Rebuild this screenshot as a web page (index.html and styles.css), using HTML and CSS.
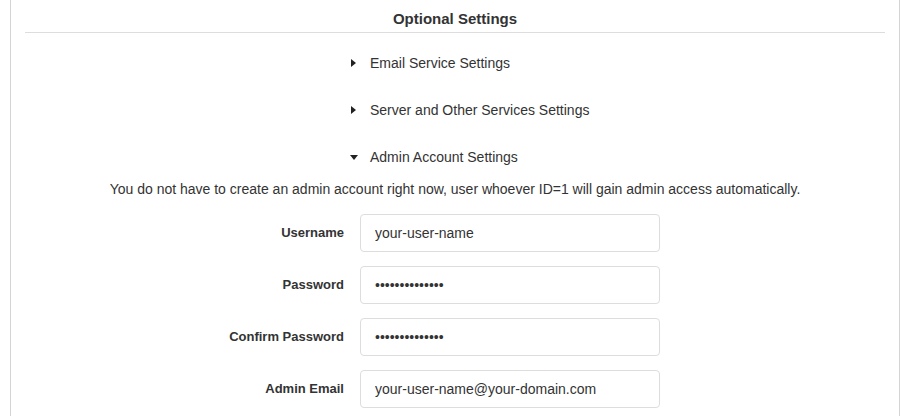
FILE: index.html
```html
<!DOCTYPE html>
<html lang="en">
<head>
<meta charset="utf-8">
<title>Optional Settings</title>
<link rel="stylesheet" href="styles.css">
</head>
<body>
<div class="page">
  <div class="panel">
    <h2 class="panel-title">Optional Settings</h2>
    <div class="sections">
      <div class="section collapsed">Email Service Settings</div>
      <div class="section collapsed">Server and Other Services Settings</div>
      <div class="section expanded">Admin Account Settings</div>
    </div>
    <p class="hint">You do not have to create an admin account right now, user whoever ID=1 will gain admin access automatically.</p>
    <form class="form">
      <label class="form-label" for="u">Username</label>
      <input class="form-input" id="u" type="text" value="your-user-name">
      <label class="form-label" for="p">Password</label>
      <input class="form-input" id="p" type="password" value="aaaaaaaaaaaaaa">
      <label class="form-label" for="c">Confirm Password</label>
      <input class="form-input" id="c" type="password" value="aaaaaaaaaaaaaa">
      <label class="form-label" for="e">Admin Email</label>
      <input class="form-input" id="e" type="text" value="your-user-name@your-domain.com">
    </form>
  </div>
</div>
</body>
</html>
```
FILE: styles.css
```css
html, body {
  margin: 0;
  padding: 0;
  background: #fff;
}
body {
  font-family: "Liberation Sans", Arial, sans-serif;
  color: #333;
  font-size: 14px;
  height: 416px;
  overflow: hidden;
}
.page {
  padding: 0 9px 0 10px;
  height: 100%;
}
.panel {
  border-left: 1px solid #d4d4d4;
  border-right: 1px solid #d4d4d4;
  padding: 0 14px;
  height: 100%;
  box-sizing: border-box;
}
.panel-title {
  margin: 0;
  padding: 9px 0 3px;
  font-size: 15px;
  line-height: 20px;
  font-weight: bold;
  text-align: center;
  color: #333;
  border-bottom: 1px solid #ddd;
}
.sections {
  padding: 20px 0 0 325px;
}
.section {
  position: relative;
  padding-left: 20px;
  line-height: 20px;
  margin-bottom: 27px;
}
.section::before {
  content: "";
  position: absolute;
  width: 0;
  height: 0;
}
.section.collapsed::before {
  left: 1px;
  top: 6px;
  border-left: 5px solid #222;
  border-top: 4px solid transparent;
  border-bottom: 4px solid transparent;
}
.section.expanded {
  margin-bottom: 12px;
}
.section.expanded::before {
  left: 0;
  top: 8px;
  border-top: 5px solid #222;
  border-left: 4px solid transparent;
  border-right: 4px solid transparent;
}
.hint {
  margin: 0;
  line-height: 20px;
  text-align: center;
}
.form {
  display: grid;
  grid-template-columns: 319px 300px;
  column-gap: 16px;
  row-gap: 14px;
  margin-top: 15px;
  align-items: center;
}
.form-label {
  font-size: 13px;
  line-height: 16px;
  padding-bottom: 1px;
  font-weight: bold;
  text-align: right;
  color: #333;
}
.form-input {
  box-sizing: border-box;
  width: 300px;
  height: 38px;
  margin: 0;
  padding: 0 13px 0 14px;
  border: 1px solid #ddd;
  border-radius: 4px;
  font-family: "Liberation Sans", Arial, sans-serif;
  font-size: 14px;
  color: #333;
  background: #fff;
  outline: none;
}
```
